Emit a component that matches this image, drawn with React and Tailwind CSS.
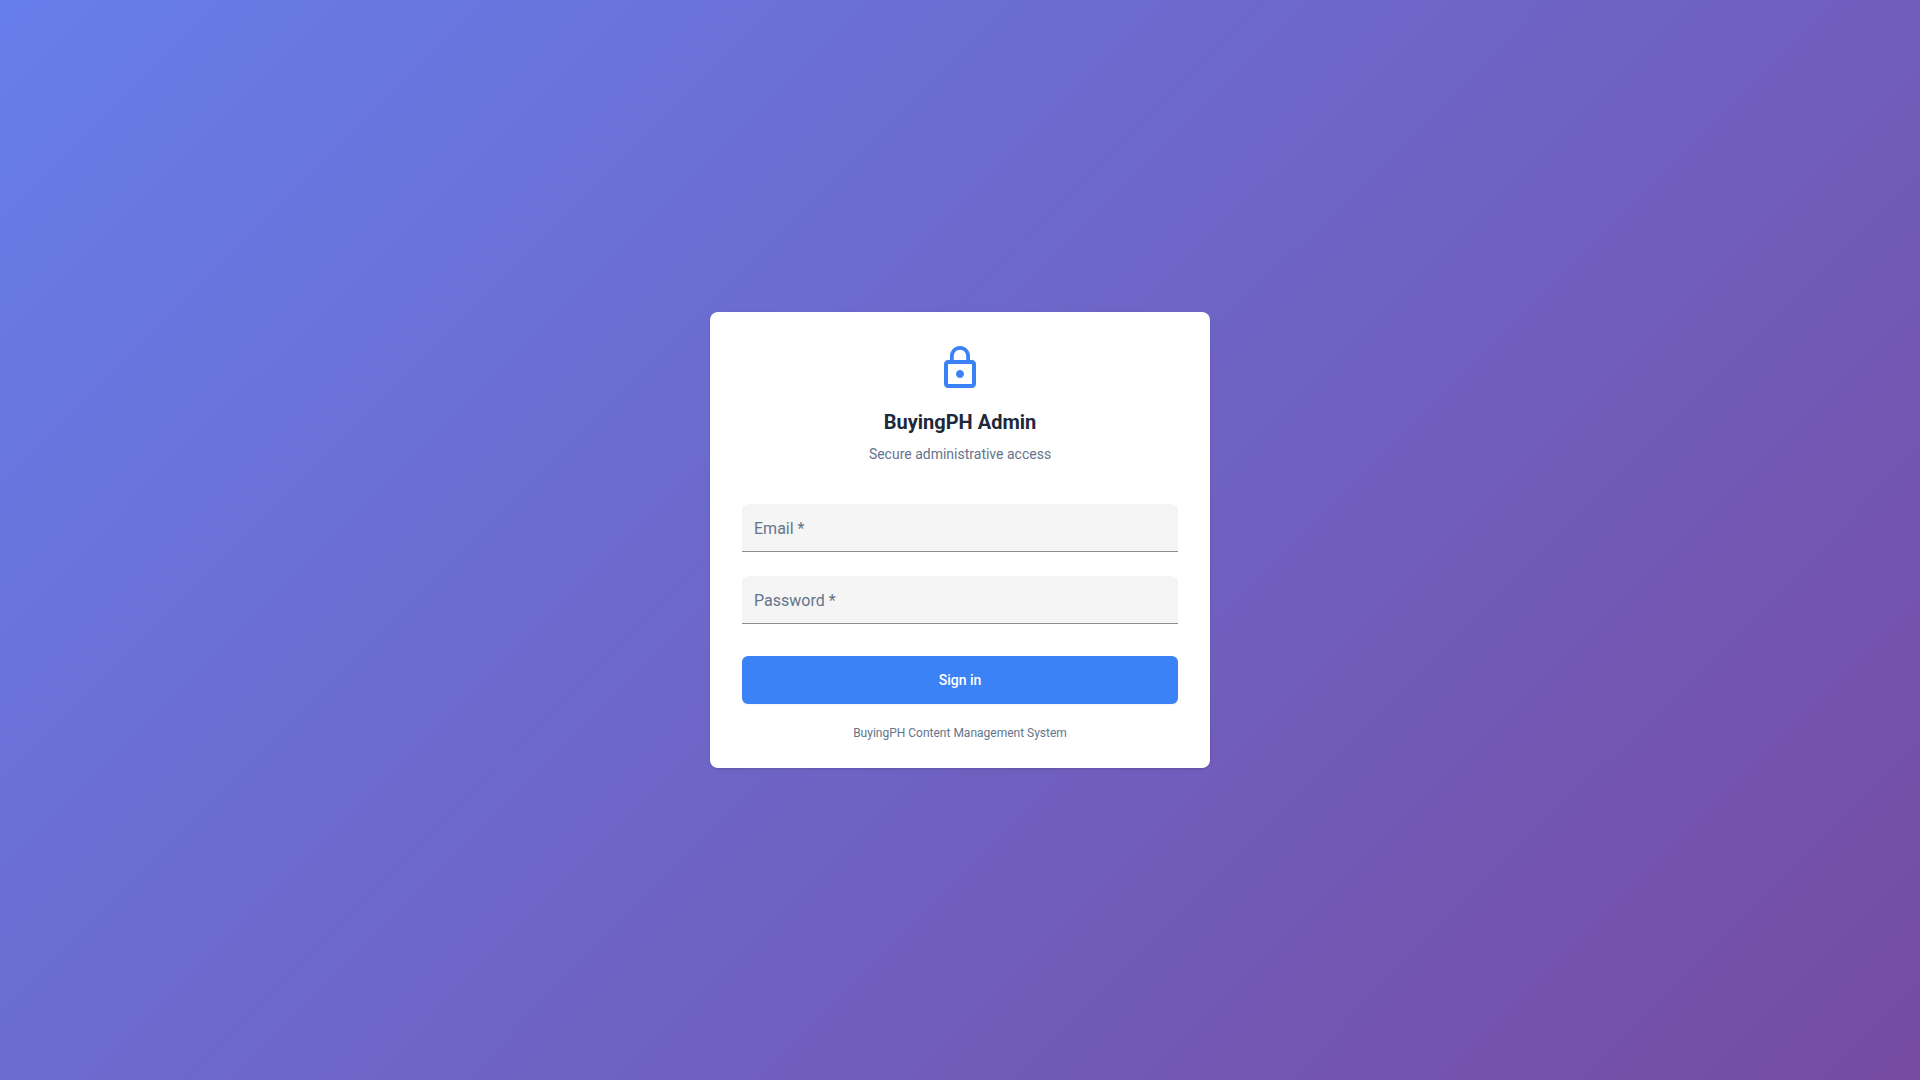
import React, { useState } from 'react';
import { MdLockOutline } from 'react-icons/md';

const Field = ({ id, label, type, value, onChange }) => (
  <div className="relative">
    <input
      id={id}
      type={type}
      value={value}
      onChange={onChange}
      placeholder=" "
      required
      className="peer block h-12 w-full rounded-t-lg bg-[#f5f5f5] px-3 pt-4 text-base text-[#1e293b] shadow-[inset_0_-1px_0_#8c8c8c] outline-none focus:shadow-[inset_0_-2px_0_#3b82f6]"
    />
    <label
      htmlFor={id}
      className="pointer-events-none absolute inset-x-3 top-1 text-xs leading-4 text-[#64748b] peer-placeholder-shown:top-0 peer-placeholder-shown:text-base peer-placeholder-shown:leading-[50px]"
    >
      {label} *
    </label>
  </div>
);

const App = () => {
  const [email, setEmail] = useState('');
  const [password, setPassword] = useState('');

  const handleSubmit = (e) => {
    e.preventDefault();
  };

  return (
    <div className="flex min-h-screen items-center justify-center bg-[linear-gradient(135deg,#667eea_0%,#764ba2_100%)] p-5 font-[Roboto,sans-serif]">
      <main className="w-full max-w-[500px] rounded-lg bg-white px-8 pt-8 pb-[26px] text-center shadow-sm">
        <MdLockOutline className="mx-auto mb-4 size-12 text-[#3b82f6]" aria-hidden="true" />
        <h1 className="mb-2 text-xl leading-7 font-bold text-[#1e293b]">BuyingPH Admin</h1>
        <p className="mb-10 text-sm text-[#64748b]">Secure administrative access</p>

        <form onSubmit={handleSubmit} className="text-left">
          <div className="mb-8 flex flex-col gap-6">
            <Field
              id="email"
              label="Email"
              type="email"
              value={email}
              onChange={(e) => setEmail(e.target.value)}
            />
            <Field
              id="password"
              label="Password"
              type="password"
              value={password}
              onChange={(e) => setPassword(e.target.value)}
            />
          </div>
          <button
            type="submit"
            className="h-12 w-full rounded-md bg-[#3b82f6] text-sm font-medium text-white shadow-xs hover:bg-[#2563eb]"
          >
            Sign in
          </button>
        </form>

        <p className="mt-5 text-xs leading-[18px] text-[#64748b]">BuyingPH Content Management System</p>
      </main>
    </div>
  );
};

export default App;
